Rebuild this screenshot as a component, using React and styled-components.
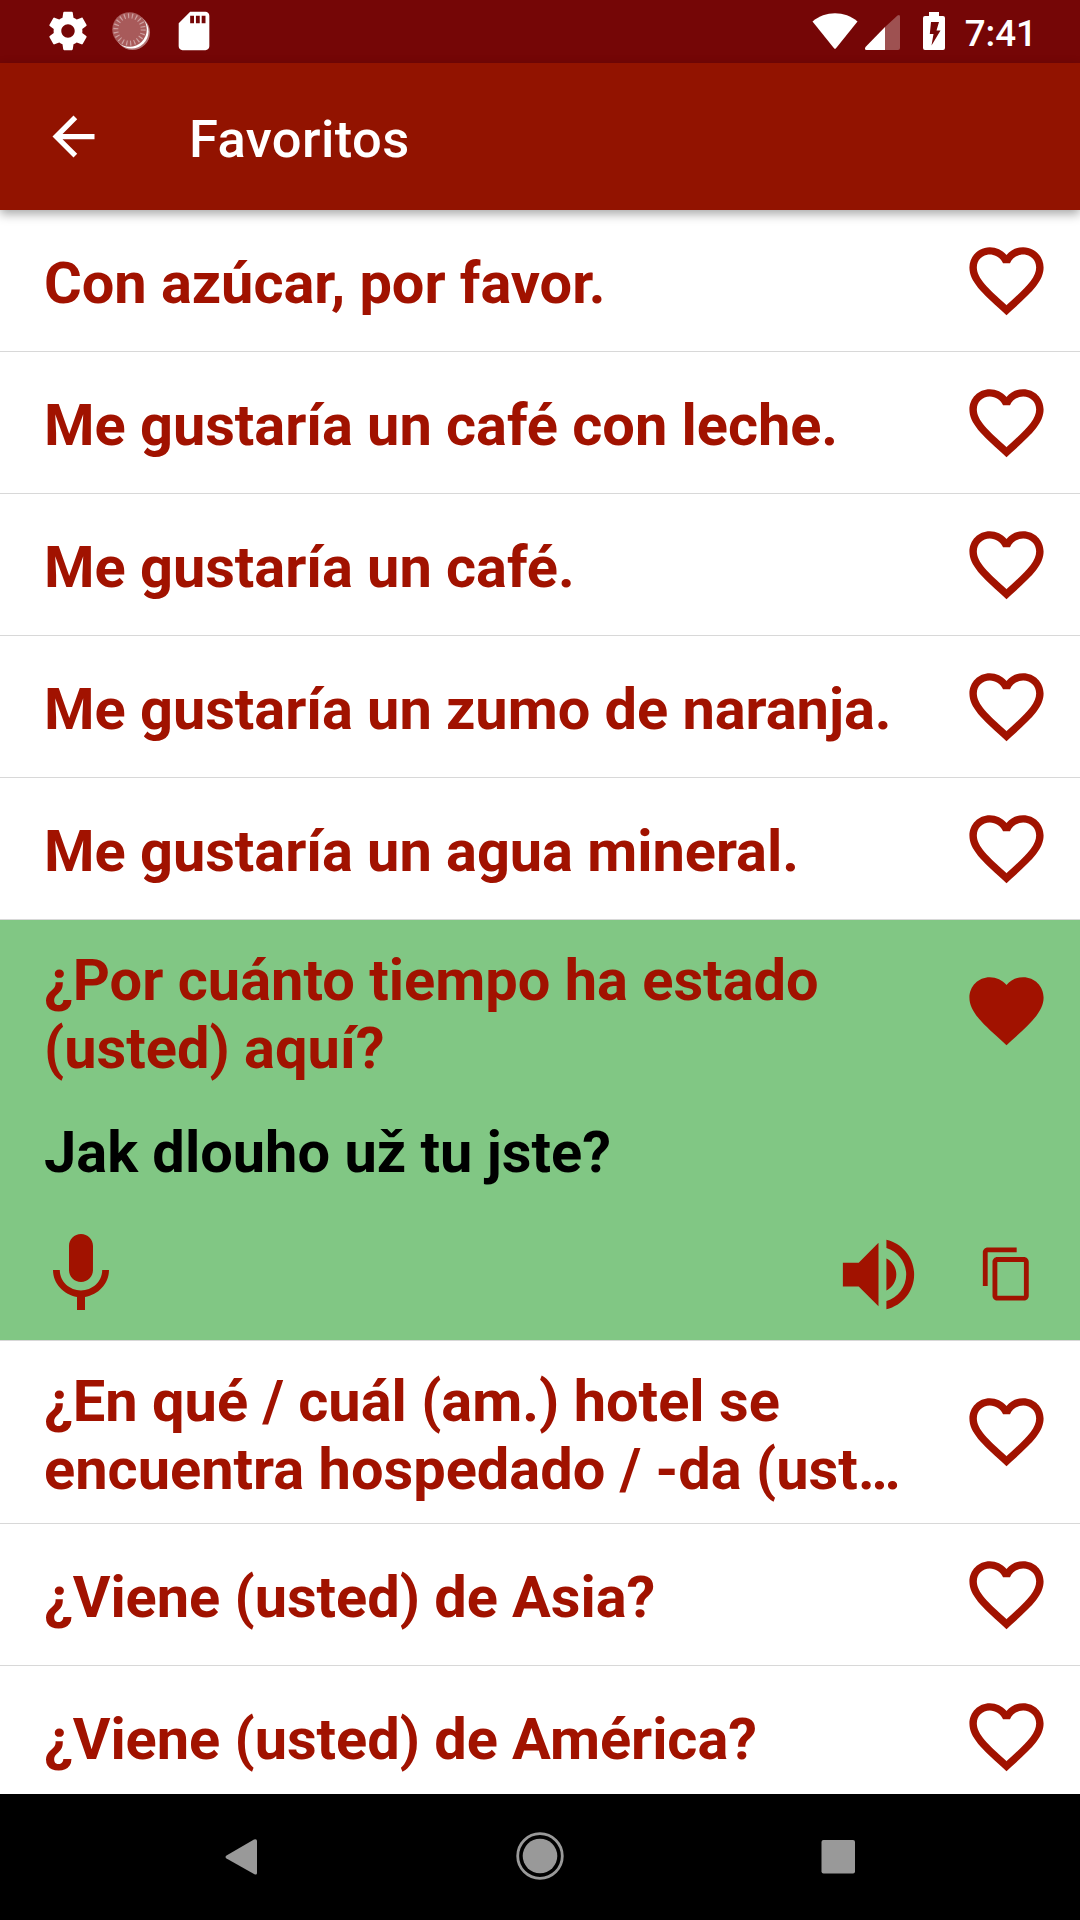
import React, { Component } from 'react';
import styled, { createGlobalStyle } from 'styled-components';

const GlobalStyle = createGlobalStyle`
  body {
    margin: 0;
    background: #fff;
    font-family: Roboto, 'Liberation Sans', sans-serif;
  }
  svg {
    display: block;
    flex: none;
  }
  button {
    padding: 0;
    border: 0;
    background: none;
    color: inherit;
  }
`;

const Screen = styled.div`
  display: flex;
  flex-direction: column;
  width: 1080px;
  height: 1920px;
  overflow: hidden;
`;

const StatusBar = styled.div`
  display: flex;
  flex: none;
  justify-content: space-between;
  height: 63px;
  background: #750606;
  color: #fff;
`;

const Notifications = styled.div`
  display: flex;
  align-items: center;
  gap: 17px;
  padding: 0 0 1px 45px;
`;

const SystemIcons = styled.div`
  display: flex;
  align-items: center;
  padding-right: 43px;
`;

const Clock = styled.span`
  margin-left: 19px;
  padding-top: 3px;
  font-size: 36.75px;
  font-weight: 500;
  line-height: 43px;
`;

const AppBar = styled.header`
  display: flex;
  flex: none;
  align-items: center;
  gap: 84px;
  height: 147px;
  padding-left: 42px;
  background: #921300;
  color: #fff;
  box-shadow: 0 4px 10px rgba(0, 0, 0, 0.35);
  z-index: 1;
`;

const Title = styled.h1`
  margin: 4px 0 0;
  font-size: 52.5px;
  font-weight: 500;
  letter-spacing: 0.4px;
  line-height: 62px;
`;

const List = styled.ul`
  flex: 1;
  min-height: 0;
  margin: 0;
  padding: 0;
  overflow: hidden;
  list-style: none;
`;

const Item = styled.li`
  border-bottom: 1px solid #d8d8d8;
  background: ${props => (props.$open ? '#81c784' : '#fff')};
  color: #a11200;
`;

const ItemHead = styled.div`
  display: flex;
  align-items: center;
  justify-content: space-between;
  height: ${props => (props.$tall ? 182 : 141)}px;
  padding: 0 29px 0 44px;
`;

const Phrase = styled.div`
  display: -webkit-box;
  width: 870px;
  margin-top: ${props => (props.$tall ? 6 : 4)}px;
  overflow: hidden;
  -webkit-box-orient: vertical;
  -webkit-line-clamp: 2;
  font-size: 57.75px;
  font-weight: 700;
  letter-spacing: ${props => (props.$tall ? 0 : '-0.05px')};
  line-height: 68px;
`;

const HeartButton = styled.button`
  padding-bottom: ${props => (props.$tall ? 1 : 0)}px;
`;

const Translation = styled.div`
  padding: 16px 44px 0;
  color: #000;
  font-size: 57.75px;
  font-weight: 700;
  line-height: 68px;
`;

const Actions = styled.div`
  display: flex;
  align-items: center;
  height: 96px;
  padding: 40px 44px 18px 33px;
`;

const Spacer = styled.div`
  flex: 1;
`;

const CopyButton = styled.button`
  margin-left: 52px;
`;

const NavBar = styled.nav`
  display: flex;
  flex: none;
  align-items: center;
  justify-content: center;
  gap: 255px;
  height: 126px;
  background: #000;
  color: #999;
`;

const icons = {
  back: 'M20 11H7.83l5.59-5.59L12 4l-8 8 8 8 1.41-1.41L7.83 13H20v-2z',
  settings: 'M19.43 12.98c.04-.32.07-.64.07-.98s-.03-.66-.07-.98l2.11-1.65c.19-.15.24-.42.12-.64l-2-3.46c-.12-.22-.39-.3-.61-.22l-2.49 1c-.52-.4-1.08-.73-1.69-.98l-.38-2.65C14.46 2.18 14.25 2 14 2h-4c-.25 0-.46.18-.49.42l-.38 2.65c-.61.25-1.17.59-1.69.98l-2.49-1c-.23-.09-.49 0-.61.22l-2 3.46c-.13.22-.07.49.12.64l2.11 1.65c-.04.32-.07.65-.07.98s.03.66.07.98l-2.11 1.65c-.19.15-.24.42-.12.64l2 3.46c.12.22.39.3.61.22l2.49-1c.52.4 1.08.73 1.69.98l.38 2.65c.03.24.24.42.49.42h4c.25 0 .46-.18.49-.42l.38-2.65c.61-.25 1.17-.59 1.69-.98l2.49 1c.23.09.49 0 .61-.22l2-3.46c.12-.22.07-.49-.12-.64l-2.11-1.65zM12 15.5c-1.93 0-3.5-1.57-3.5-3.5s1.57-3.5 3.5-3.5 3.5 1.57 3.5 3.5-1.57 3.5-3.5 3.5z',
  sdCard: 'M18 2h-8L4.02 8 4 20c0 1.1.9 2 2 2h12c1.1 0 2-.9 2-2V4c0-1.1-.9-2-2-2zm-6 6h-2V4h2v4zm3 0h-2V4h2v4zm3 0h-2V4h2v4z',
  heart: 'M12 21.35l-1.45-1.32C5.4 15.36 2 12.28 2 8.5 2 5.42 4.42 3 7.5 3c1.74 0 3.41.81 4.5 2.09C13.09 3.81 14.76 3 16.5 3 19.58 3 22 5.42 22 8.5c0 3.78-3.4 6.86-8.55 11.54L12 21.35z',
  heartBorder: 'M16.5 3c-1.74 0-3.41.81-4.5 2.09C10.91 3.81 9.24 3 7.5 3 4.42 3 2 5.42 2 8.5c0 3.78 3.4 6.86 8.55 11.54L12 21.35l1.45-1.32C18.6 15.36 22 12.28 22 8.5 22 5.42 19.58 3 16.5 3zm-4.4 15.55l-.1.1-.1-.1C7.14 14.24 4 11.39 4 8.5 4 6.5 5.5 5 7.5 5c1.54 0 3.04.99 3.57 2.36h1.87C13.46 5.99 14.96 5 16.5 5c2 0 3.5 1.5 3.5 3.5 0 2.89-3.14 5.74-7.9 10.05z',
  mic: 'M12 14c1.66 0 2.99-1.34 2.99-3L15 5c0-1.66-1.34-3-3-3S9 3.34 9 5v6c0 1.66 1.34 3 3 3zm5.3-3c0 3-2.54 5.1-5.3 5.1S6.7 14 6.7 11H5c0 3.41 2.72 6.23 6 6.72V21h2v-3.28c3.28-.48 6-3.3 6-6.72h-1.7z',
  volume: 'M3 9v6h4l5 5V4L7 9H3zm13.5 3c0-1.77-1.02-3.29-2.5-4.03v8.05c1.48-.73 2.5-2.25 2.5-4.02zM14 3.23v2.06c2.89.86 5 3.54 5 6.71s-2.11 5.85-5 6.71v2.06c4.01-.91 7-4.49 7-8.77s-2.99-7.86-7-8.77z',
  copy: 'M16 1H4c-1.1 0-2 .9-2 2v14h2V3h12V1zm3 4H8c-1.1 0-2 .9-2 2v14c0 1.1.9 2 2 2h11c1.1 0 2-.9 2-2V7c0-1.1-.9-2-2-2zm0 16H8V7h11v14z'
}

const Icon = ({ name, size }) => (
  <svg width={size} height={size} viewBox="0 0 24 24">
    <path fill="currentColor" d={icons[name]}></path>
  </svg>
)

// Translucent disc with radial ticks over a white crescent
const SpinnerIcon = () => (
  <svg width="46" height="46" viewBox="0 0 46 46">
    <circle cx="24.5" cy="24.5" r="17.5" fill="#fff" opacity="0.45"></circle>
    <circle cx="23.5" cy="23.5" r="17" fill="#fff"></circle>
    <circle cx="21.5" cy="21.5" r="17.3" fill="#a85a5a"></circle>
    <circle cx="21.5" cy="21.5" r="13.7" fill="none" stroke="#cda0a0" strokeWidth="5" strokeDasharray="1.2 2.713"></circle>
  </svg>
)

const phrases = [
  { text: 'Con azúcar, por favor.' },
  { text: 'Me gustaría un café con leche.' },
  { text: 'Me gustaría un café.' },
  { text: 'Me gustaría un zumo de naranja.' },
  { text: 'Me gustaría un agua mineral.' },
  { text: '¿Por cuánto tiempo ha estado (usted) aquí?', translation: 'Jak dlouho už tu jste?', tall: true },
  { text: '¿En qué / cuál (am.) hotel se encuentra hospedado / -da (ust…', tall: true },
  { text: '¿Viene (usted) de Asia?' },
  { text: '¿Viene (usted) de América?' }
]

class App extends Component {
  constructor(props) {
    super(props)
    this.state = {
      activePhrase: 5
    }
  }

  renderPhrase = (phrase, index) => {
    const open = index === this.state.activePhrase && Boolean(phrase.translation)
    return (
      <Item key={phrase.text} $open={open}>
        <ItemHead $tall={phrase.tall} onClick={() => this.setState({ activePhrase: index })}>
          <Phrase $tall={phrase.tall}>{phrase.text}</Phrase>
          <HeartButton $tall={phrase.tall}>
            <Icon name={open ? 'heart' : 'heartBorder'} size={89} />
          </HeartButton>
        </ItemHead>
        {open && <Translation>{phrase.translation}</Translation>}
        {open &&
          <Actions>
            <button><Icon name="mic" size={96} /></button>
            <Spacer />
            <button><Icon name="volume" size={95} /></button>
            <CopyButton><Icon name="copy" size={58} /></CopyButton>
          </Actions>
        }
      </Item>
    )
  }

  render() {
    return (
      <Screen>
        <GlobalStyle />
        <StatusBar>
          <Notifications>
            <Icon name="settings" size={46} />
            <SpinnerIcon />
            <Icon name="sdCard" size={46} />
          </Notifications>
          <SystemIcons>
            <svg width="134" height="63" viewBox="0 0 134 63">
              <path fill="#fff" d="M0.5 21.5C13 10.5 33 10.5 45.5 21.5L24 48.3Q23 49.3 22 48.3Z"></path>
              <path fill="#fff" opacity="0.3" d="M73 27L85.5 15.5Q88 14 88 16.5V48Q88 50 86 50H73Z"></path>
              <path fill="#fff" d="M73 27V50H54.5Q52 50 53.5 47Z"></path>
              <path fill="#fff" fillRule="evenodd" d="M117 12H127V16H131Q133 16 133 18V48Q133 50 131 50H113Q111 50 111 48V18Q111 16 113 16H117ZM119 22L117.8 34H121.5L119.5 45.5L128.5 30.5H124.5L127 22Z"></path>
            </svg>
            <Clock>7:41</Clock>
          </SystemIcons>
        </StatusBar>
        <AppBar>
          <button><Icon name="back" size={63} /></button>
          <Title>Favoritos</Title>
        </AppBar>
        <List>
          {phrases.map(this.renderPhrase)}
        </List>
        <NavBar>
          <svg width="40" height="48" viewBox="0 0 40 48">
            <path fill="currentColor" d="M5.5 22.5L33 6.5Q36 5.5 36 8V40Q36 42.5 33 41L5.5 25.5Q3.5 24 5.5 22.5Z"></path>
          </svg>
          <svg width="48" height="50" viewBox="0 0 48 50">
            <circle cx="24" cy="24" r="22.3" fill="none" stroke="currentColor" strokeWidth="2.8"></circle>
            <circle cx="24" cy="24" r="17.3" fill="currentColor"></circle>
          </svg>
          <svg width="40" height="48" viewBox="0 0 40 48">
            <rect x="2.5" y="7" width="33.5" height="33.5" rx="2" fill="currentColor"></rect>
          </svg>
        </NavBar>
      </Screen>
    )
  }
}

export default App;
